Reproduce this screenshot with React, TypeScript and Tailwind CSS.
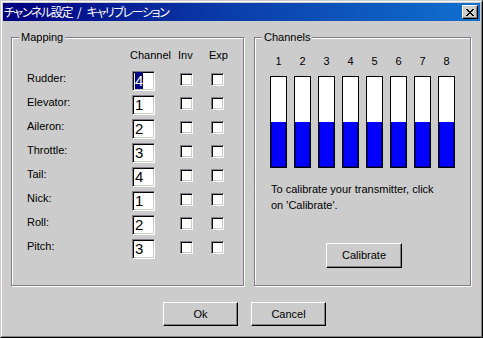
import React from "react";

const rows: [string, string][] = [
  ["Rudder:", "4"],
  ["Elevator:", "1"],
  ["Aileron:", "2"],
  ["Throttle:", "3"],
  ["Tail:", "4"],
  ["Nick:", "1"],
  ["Roll:", "2"],
  ["Pitch:", "3"],
];

function Checkbox() {
  return (
    <div className="w-[13px] h-[13px] mt-[2px] bg-white border border-t-[#857a8a] border-l-[#857a8a] border-r-white border-b-white shadow-[inset_1px_1px_0_#000,inset_-1px_-1px_0_#cccccc]" />
  );
}

function Button({ label, className }: { label: string; className: string }) {
  return (
    <div
      className={
        "flex items-center justify-center bg-[#cccccc] border border-t-white border-l-white border-r-black border-b-black shadow-[inset_-1px_-1px_0_#808080] text-[11px] " +
        className
      }
    >
      {label}
    </div>
  );
}

export default function App() {
  return (
    <div
      className="w-[483px] h-[338px] bg-[#cccccc] border border-t-[#cccccc] border-l-[#cccccc] border-r-black border-b-black text-black text-[11px] leading-[13px]"
      style={{ fontFamily: '"Liberation Sans", Arial, sans-serif' }}
    >
      <div className="h-full border border-t-white border-l-white border-r-[#808080] border-b-[#808080] p-px flex flex-col">
        {/* Title bar */}
        <div className="h-[18px] flex items-center pl-[1px] bg-[linear-gradient(90deg,#000080_0%,#0a3aa8_45%,#1070d0_100%)]">
          <div
            className="flex text-white text-[12px] leading-[14px] [font-feature-settings:'palt'] tracking-[-1.4px]"
            style={{ fontFamily: '"Noto Sans CJK JP", "Noto Sans", sans-serif' }}
          >
            <span>チャンネル設定</span>
            <span className="mx-[5px] tracking-normal">/</span>
            <span>キャリブレーション</span>
          </div>
          <div className="ml-auto mr-[2px] w-[16px] h-[14px] bg-[#cccccc] border border-t-white border-l-white border-r-black border-b-black shadow-[inset_-1px_-1px_0_#808080] flex items-center justify-center">
            <svg width="8" height="7" viewBox="0 0 8 7">
              <path d="M0 0h2v1h1v1h2V1h1V0h2v1H7v1H6v1H5v1h1v1h1v1h1v1H6V6H5V5H3v1H2v1H0V6h1V5h1V4h1V3H2V2H1V1H0z" fill="black" />
            </svg>
          </div>
        </div>

        {/* Group boxes */}
        <div className="flex mt-[16px] pl-[8px]">
          {/* Mapping */}
          <div className="relative w-[233px] h-[249px] border border-[#857a8a] shadow-[inset_1px_1px_0_#fff,1px_1px_0_#fff]">
            <span className="absolute top-[-7px] left-[7px] px-[2px] bg-[#cccccc]">Mapping</span>
            <div className="pt-[11px] pl-[15px]">
              <div className="grid grid-cols-[105px_48px_31px_13px]">
                <div />
                <div className="ml-[-2px] whitespace-nowrap">Channel</div>
                <div className="ml-[-2px]">Inv</div>
                <div className="ml-[-2px] whitespace-nowrap">Exp</div>
              </div>
              <div className="mt-[9px] flex flex-col gap-[4px]">
                {rows.map(([label, val], i) => (
                  <div key={label} className="grid grid-cols-[105px_48px_31px_13px] items-start h-[20px]">
                    <div className="pt-[1px]">{label}</div>
                    <div className="w-[23px] h-[20px] bg-white border border-t-[#857a8a] border-l-[#857a8a] border-r-white border-b-white shadow-[inset_1px_1px_0_#000,inset_-1px_-1px_0_#cccccc] pl-[2px] text-[15px] leading-[16px] pt-[1px]">
                      {i === 0 ? (
                        <span className="bg-[#000080] text-white">{val}</span>
                      ) : (
                        val
                      )}
                    </div>
                    <Checkbox />
                    <Checkbox />
                  </div>
                ))}
              </div>
            </div>
          </div>

          {/* Channels */}
          <div className="relative ml-[10px] w-[217px] h-[249px] border border-[#857a8a] shadow-[inset_1px_1px_0_#fff,1px_1px_0_#fff]">
            <span className="absolute top-[-7px] left-[7px] px-[2px] bg-[#cccccc]">Channels</span>
            <div className="pt-[17px] pl-[15px] flex flex-col">
              <div className="flex gap-[7px]">
                {[1, 2, 3, 4, 5, 6, 7, 8].map((n) => (
                  <div key={n} className="w-[17px] text-center">
                    {n}
                  </div>
                ))}
              </div>
              <div className="flex gap-[7px] mt-[8px]">
                {[1, 2, 3, 4, 5, 6, 7, 8].map((n) => (
                  <div key={n} className="w-[17px] h-[92px] border border-black bg-white flex flex-col justify-end">
                    <div className="h-[45px] bg-[#0000ff] border-l border-r border-b border-[#00008b]" />
                  </div>
                ))}
              </div>
              <div className="mt-[13px] ml-[1px] leading-[16px]">
                <div>To calibrate your transmitter, click</div>
                <div>on 'Calibrate'.</div>
              </div>
              <Button label="Calibrate" className="mt-[30px] ml-[56px] w-[76px] h-[25px]" />
            </div>
          </div>
        </div>

        {/* Bottom buttons */}
        <div className="flex mt-[16px] pl-[160px] gap-[13px]">
          <Button label="Ok" className="w-[75px] h-[24px]" />
          <Button label="Cancel" className="w-[75px] h-[24px]" />
        </div>
      </div>
    </div>
  );
}
